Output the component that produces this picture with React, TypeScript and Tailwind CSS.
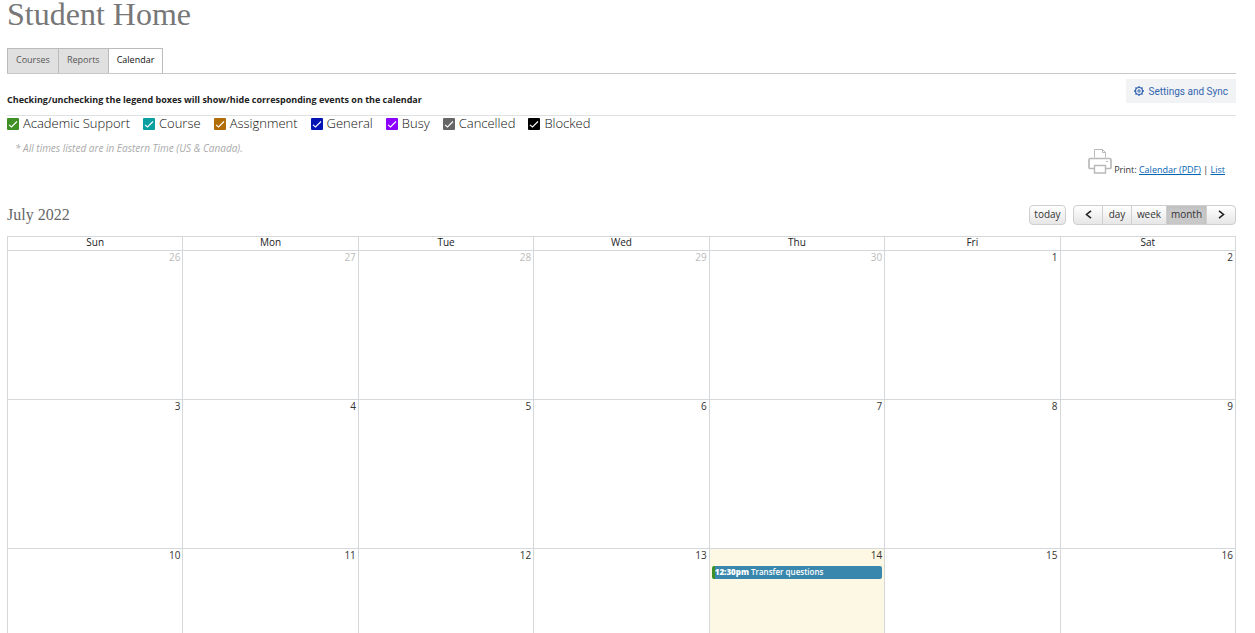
import { useState } from "react"
import { clsx } from "clsx"

interface LegendItem {
  label: string
  color: string
}

interface Day {
  day: number
  outside?: boolean
  today?: boolean
}

const TABS = ["Courses", "Reports", "Calendar"]

const LEGEND: LegendItem[] = [
  { label: "Academic Support", color: "bg-[#3f9127]" },
  { label: "Course", color: "bg-[#0b9f9f]" },
  { label: "Assignment", color: "bg-[#b06d08]" },
  { label: "General", color: "bg-[#0515b5]" },
  { label: "Busy", color: "bg-[#8b00ff]" },
  { label: "Cancelled", color: "bg-[#666666]" },
  { label: "Blocked", color: "bg-black" },
]

const WEEKDAYS = ["Sun", "Mon", "Tue", "Wed", "Thu", "Fri", "Sat"]

const WEEKS: Day[][] = [
  [
    { day: 26, outside: true },
    { day: 27, outside: true },
    { day: 28, outside: true },
    { day: 29, outside: true },
    { day: 30, outside: true },
    { day: 1 },
    { day: 2 },
  ],
  [{ day: 3 }, { day: 4 }, { day: 5 }, { day: 6 }, { day: 7 }, { day: 8 }, { day: 9 }],
  [
    { day: 10 },
    { day: 11 },
    { day: 12 },
    { day: 13 },
    { day: 14, today: true },
    { day: 15 },
    { day: 16 },
  ],
]

function GearIcon() {
  return (
    <svg className="size-[10px]" viewBox="0 0 20 20" fill="none" stroke="currentColor" aria-hidden="true">
      <circle cx="10" cy="10" r="7" strokeWidth="2.4" />
      <circle cx="10" cy="10" r="2.4" strokeWidth="2" />
      <path
        d="M10 0v3M10 17v3M0 10h3M17 10h3M3 3l2.1 2.1M14.9 14.9L17 17M3 17l2.1-2.1M14.9 5.1L17 3"
        strokeWidth="2.6"
      />
    </svg>
  )
}

function PrinterIcon() {
  return (
    <svg className="h-[25px] w-6" viewBox="0 0 24 25" fill="none" stroke="#b9b9b9" aria-hidden="true">
      <path d="M6.500 8.500v-8h8l3 3v5M14.500 .5v3h3" />
      <path d="M6 19.500H2q-1 0-1-1V11q0-1.500 1.500-1.500h19q1.500 0 1.500 1.500v7.500q0 1-1 1h-4" strokeWidth="1.700" />
      <path d="M6.500 16.500h11v7.500h-11z" strokeWidth="1.400" />
      <path d="M18 12.500h2" />
    </svg>
  )
}

function Chevron({ flip }: { flip?: boolean }) {
  return (
    <svg
      className={clsx("h-[9px] w-[7px]", flip && "rotate-180")}
      viewBox="0 0 7 9"
      fill="none"
      stroke="#222"
      strokeWidth="1.600"
      aria-hidden="true"
    >
      <path d="M6 .8L1.500 4.500 6 8.200" />
    </svg>
  )
}

function LegendCheckbox({ label, color }: LegendItem) {
  const [checked, setChecked] = useState(true)

  return (
    <label className="flex items-center gap-1">
      <span className="relative flex size-3">
        <input
          type="checkbox"
          checked={checked}
          onChange={(e) => setChecked(e.target.checked)}
          className={clsx("size-3 appearance-none rounded-[1px]", color)}
        />
        {checked && (
          <svg
            className="pointer-events-none absolute inset-0 size-3"
            viewBox="0 0 12 12"
            fill="none"
            stroke="#fff"
            strokeWidth="1.100"
            aria-hidden="true"
          >
            <path d="M2 6.800L4.500 9 10 3.500" />
          </svg>
        )}
      </span>
      {label}
    </label>
  )
}

const BUTTON =
  "flex h-5 items-center justify-center border border-[#cfcfcf] pb-0.5 text-[10px] text-[#333]"
const BUTTON_UP = "bg-linear-to-b from-white to-[#e6e6e6]"

function CalendarToolbar() {
  return (
    <div className="flex items-center gap-[7px]">
      <button className={clsx(BUTTON, BUTTON_UP, "w-[37px] rounded-sm")}>today</button>
      <div className="flex">
        <button aria-label="Previous" className={clsx(BUTTON, BUTTON_UP, "w-[30px] rounded-l-sm")}>
          <Chevron />
        </button>
        <button className={clsx(BUTTON, BUTTON_UP, "-ml-px w-[30px]")}>day</button>
        <button className={clsx(BUTTON, BUTTON_UP, "-ml-px w-9")}>week</button>
        <button className={clsx(BUTTON, "-ml-px w-[41px] border-[#b8b8b8] bg-[#c8c8c8] shadow-inner")}>
          month
        </button>
        <button aria-label="Next" className={clsx(BUTTON, BUTTON_UP, "-ml-px w-[30px] rounded-r-sm")}>
          <Chevron flip />
        </button>
      </div>
    </div>
  )
}

function EventBar({ time, title }: { time: string; title: string }) {
  return (
    <a
      href="#event"
      className="mx-0.5 mt-1 block h-[13px] truncate rounded-xs border-l-[3px] border-[#3f9127] bg-[#3a87ad] text-left text-[8px] leading-3 font-semibold text-white"
    >
      <span className="font-extrabold">{time}</span> {title}
    </a>
  )
}

function MonthGrid() {
  return (
    <table className="w-full table-fixed border-collapse text-[10px]">
      <thead>
        <tr>
          {WEEKDAYS.map((name) => (
            <th
              key={name}
              className="h-[14px] border border-[#d5d8da] align-top leading-[11px] font-normal text-[#222]"
            >
              {name}
            </th>
          ))}
        </tr>
      </thead>
      <tbody>
        {WEEKS.map((week) => (
          <tr key={week[0].day}>
            {week.map(({ day, outside, today }) => (
              <td
                key={day}
                className={clsx(
                  "h-[149px] border border-[#d5d8da] text-right align-top",
                  outside ? "text-[#bbb]" : "text-[#333]",
                  today && "bg-[#fcf8e3]"
                )}
              >
                <div className="pr-0.5 leading-[13px]">{day}</div>
                {today && <EventBar time="12:30pm" title="Transfer questions" />}
              </td>
            ))}
          </tr>
        ))}
      </tbody>
    </table>
  )
}

export default function App() {
  const [activeTab, setActiveTab] = useState("Calendar")

  return (
    <main className="h-screen overflow-hidden bg-white pr-[19px] pl-[7px] font-['Open_Sans',sans-serif] text-[#333]">
      <h1 className="h-12 font-['Roboto_Slab','Liberation_Serif',serif] text-[32px] leading-7 font-thin text-[#777]">
        Student Home
      </h1>

      <div role="tablist" className="flex border-b border-[#c8c8c8]">
        {TABS.map((tab) => (
          <button
            key={tab}
            role="tab"
            aria-selected={tab === activeTab}
            onClick={() => setActiveTab(tab)}
            className={clsx(
              "h-[25px] border-t border-r border-[#bbb] px-2 pb-0.5 text-[9px] first:border-l",
              tab === activeTab ? "-mb-px bg-white text-[#111]" : "bg-[#e0e0e0] text-[#555]"
            )}
          >
            {tab}
          </button>
        ))}
      </div>

      <section className="flex h-[42px] items-start justify-between border-b border-[#dfe0e2]">
        <h2 className="pt-5 text-[9px] leading-3 font-bold text-[#222]">
          Checking/unchecking the legend boxes will show/hide corresponding events on the calendar
        </h2>
        <button className="mt-[5px] flex h-6 items-center gap-1 bg-[#f1f3f5] px-2 font-[Roboto,sans-serif] text-[10px] text-[#3465b0]">
          <GearIcon />
          Settings and Sync
        </button>
      </section>

      <div className="flex h-4 items-center gap-[13px] text-[13px] font-light text-[#111]">
        {LEGEND.map((item) => (
          <LegendCheckbox key={item.label} {...item} />
        ))}
      </div>

      <div className="flex h-[73px] justify-between">
        <p className="pt-2 pl-2 text-[10px] leading-4 text-[#aaa] italic">
          * All times listed are in Eastern Time (US &amp; Canada).
        </p>
        <div className="flex items-start gap-0.5 pt-[17px] pr-[11px] text-[9px]">
          <PrinterIcon />
          <p className="pt-[15px] leading-3">
            Print:{" "}
            <a href="#pdf" className="text-[#0565b5] underline">
              Calendar (PDF)
            </a>{" "}
            |{" "}
            <a href="#list" className="text-[#0565b5] underline">
              List
            </a>
          </p>
        </div>
      </div>

      <div className="mb-[11px] flex h-5 items-center justify-between">
        <h2 className="font-['Roboto_Slab','Liberation_Serif',serif] text-[16px] font-light text-[#666]">July 2022</h2>
        <CalendarToolbar />
      </div>

      <MonthGrid />
    </main>
  )
}
